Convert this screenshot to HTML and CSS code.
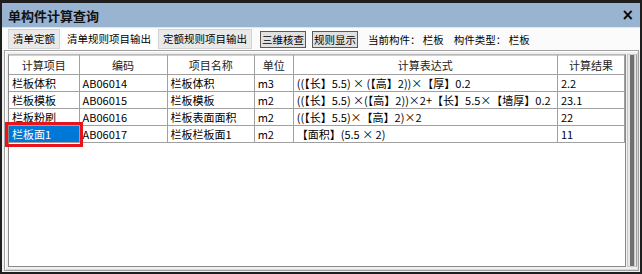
FILE: index.html
```html
<!DOCTYPE html>
<html lang="zh-CN">

<head>
    <meta charset="UTF-8">
    <meta name="viewport" content="width=device-width, initial-scale=1.0">
    <title>单构件计算查询</title>
    <link rel="stylesheet" href="styles.css">
</head>

<body>
    <div class="window">
        <div class="title-bar">
            <span class="title">单构件计算查询</span>
            <span class="close">×</span>
        </div>
        <div class="tool-bar">
            <ul class="tabs">
                <li>清单定额</li>
                <li class="active">清单规则项目输出</li>
                <li>定额规则项目输出</li>
            </ul>
            <span class="btn first">三维核查</span>
            <span class="btn">规则显示</span>
            <span class="info">当前构件：&nbsp;栏板</span>
            <span class="info">构件类型：&nbsp;栏板</span>
        </div>
        <div class="panel">
            <div class="grid">
                <table>
                    <colgroup>
                        <col class="c1">
                        <col class="c2">
                        <col class="c3">
                        <col class="c4">
                        <col class="c5">
                        <col class="c6">
                    </colgroup>
                    <thead>
                        <tr>
                            <th>计算项目</th>
                            <th>编码</th>
                            <th>项目名称</th>
                            <th>单位</th>
                            <th>计算表达式</th>
                            <th>计算结果</th>
                        </tr>
                    </thead>
                    <tbody>
                        <tr>
                            <td>栏板体积</td>
                            <td>AB06014</td>
                            <td>栏板体积</td>
                            <td>m3</td>
                            <td>((【长】5.5) × (【高】2))×【厚】0.2</td>
                            <td>2.2</td>
                        </tr>
                        <tr>
                            <td>栏板模板</td>
                            <td>AB06015</td>
                            <td>栏板模板</td>
                            <td>m2</td>
                            <td>((【长】5.5) ×(【高】2))×2+【长】5.5×【墙厚】0.2</td>
                            <td>23.1</td>
                        </tr>
                        <tr>
                            <td>栏板粉刷</td>
                            <td>AB06016</td>
                            <td>栏板表面面积</td>
                            <td>m2</td>
                            <td>((【长】5.5)×【高】2)×2</td>
                            <td>22</td>
                        </tr>
                        <tr>
                            <td class="selected">栏板面1</td>
                            <td>AB06017</td>
                            <td>栏板栏板面1</td>
                            <td>m2</td>
                            <td>【面积】(5.5 × 2)</td>
                            <td>11</td>
                        </tr>
                    </tbody>
                </table>
            </div>
            <div class="scroll">
                <div class="thumb"></div>
            </div>
        </div>
    </div>
</body>

</html>
```

FILE: styles.css
```css
* {
    padding: 0;
    margin: 0;
    box-sizing: border-box;
}

li {
    list-style: none;
}

body {
    background-color: #fff;
    font-family: "Noto Sans CJK SC", sans-serif;
    font-size: 11px;
    color: #000;
}

.window {
    width: 642px;
    height: 274px;
    border: 2px solid #1e1e1e;
    border-top-width: 3px;
    background-color: #f0f0f0;
    display: flex;
    flex-direction: column;
}

.title-bar {
    height: 24px;
    background-color: #99b4d1;
    display: flex;
    align-items: center;
    justify-content: space-between;
    padding: 0 6px 0 6px;
}

.title {
    font-size: 13px;
    font-weight: bold;
    color: #111;
}

.close {
    font-size: 15px;
    font-weight: bold;
    font-family: "DejaVu Sans", sans-serif;
    line-height: 1;
}

.tool-bar {
    height: 23px;
    background-color: #fbfbfb;
    border-top: 1px solid #e4e4e4;
    display: flex;
    align-items: center;
    padding-left: 6px;
    font-size: 10.5px;
}

.tabs {
    display: flex;
    height: 20px;
    align-self: flex-start;
    margin-top: 1px;
}

.tabs li {
    padding: 0 4px;
    line-height: 18px;
    background-color: #e9e9e9;
    border: 1px solid #d4d4d4;
    margin-right: 2px;
}

.tabs .active {
    background-color: #fff;
    border-color: #fff;
}

.btn {
    height: 17px;
    line-height: 15px;
    padding: 0 1px;
    border: 1px solid #5a5a5a;
    background-color: #e1e1e1;
    margin-left: 6px;
}

.btn.first {
    margin-left: 6px;
}

.info {
    margin-left: 10px;
}

.panel {
    flex: 1;
    margin: 0 1px 1px 2px;
    border: 1px solid #a0a0a0;
    box-shadow: inset 1px 1px 0 #fff, inset -1px -1px 0 #d8d8d8;
    padding: 3px 1px 3px 3px;
    display: flex;
    gap: 1px;
}

.grid {
    flex: 1;
    background-color: #fff;
    border: 1px solid #8a8a8a;
    border-top-color: #b8b8b8;
}

table {
    width: 616px;
    border-collapse: collapse;
    table-layout: fixed;
}

.c1 {
    width: 70px;
}

.c2 {
    width: 88px;
}

.c3 {
    width: 87px;
}

.c4 {
    width: 39px;
}

.c5 {
    width: 264px;
}

.c6 {
    width: 67px;
}

th,
td {
    border: 1px solid #a0a0a0;
    white-space: nowrap;
    overflow: hidden;
    font-weight: normal;
}

th {
    height: 19px;
    text-align: center;
    border-top-color: #d0d0d0;
    color: #222;
}

td {
    height: 17px;
    line-height: 15px;
    padding: 0 3px;
    text-align: left;
}

tr td:first-child,
tr th:first-child {
    border-left: none;
}

td.selected {
    background-color: #0078d7;
    color: #fff;
    outline: 3px solid #e8141b;
    outline-offset: 1px;
}

.scroll {
    width: 10px;
    border: 1px solid #c8c8c8;
    border-right-color: #a0a0a0;
    background-color: #e8e8e8;
    padding: 0 1px 0 2px;
}

.thumb {
    height: 100%;
    background-color: #707070;
    border-right: 1px solid #c8c8c8;
}
```
